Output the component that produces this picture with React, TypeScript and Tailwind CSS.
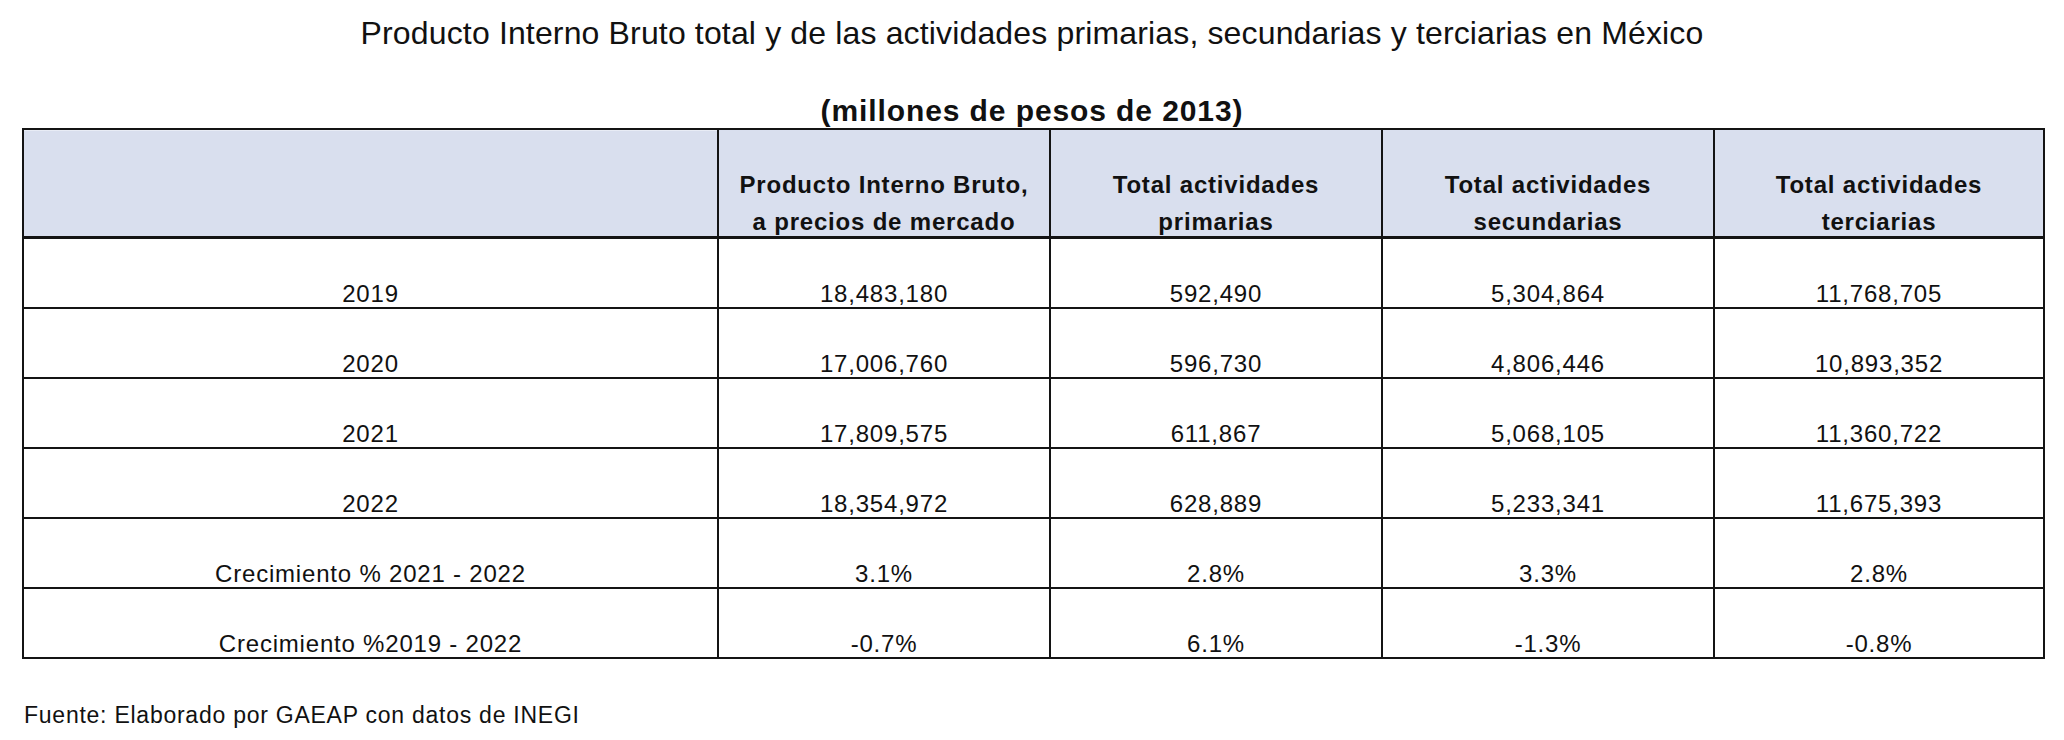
const headers = [
  ['Producto Interno Bruto,', 'a precios de mercado'],
  ['Total actividades', 'primarias'],
  ['Total actividades', 'secundarias'],
  ['Total actividades', 'terciarias'],
];

const rows: string[][] = [
  ['2019', '18,483,180', '592,490', '5,304,864', '11,768,705'],
  ['2020', '17,006,760', '596,730', '4,806,446', '10,893,352'],
  ['2021', '17,809,575', '611,867', '5,068,105', '11,360,722'],
  ['2022', '18,354,972', '628,889', '5,233,341', '11,675,393'],
  ['Crecimiento % 2021 - 2022', '3.1%', '2.8%', '3.3%', '2.8%'],
  ['Crecimiento %2019 - 2022', '-0.7%', '6.1%', '-1.3%', '-0.8%'],
];

const grid = 'grid grid-cols-[693px_332px_332px_332px_330px]';

export default function App() {
  return (
    <div className="w-[2064px] h-[740px] bg-white pt-[15px] text-[#111] font-['Liberation_Sans',Arial,sans-serif]">
      <h1 className="text-center text-[32px] leading-[36px] tracking-[0.15px] font-normal">
        Producto Interno Bruto total y de las actividades primarias, secundarias y terciarias en México
      </h1>
      <h2 className="mt-[42px] text-center text-[30px] leading-[35px] tracking-[0.9px] font-bold">
        (millones de pesos de 2013)
      </h2>

      <div className="ml-[22px] w-[2023px] border-2 border-[#141414]">
        {/* encabezado */}
        <div className={`${grid} h-[109px] bg-[#d9dfee] border-b-[3px] border-[#141414]`}>
          <div className="border-t border-[#e8ecf5]" />
          {headers.map((h, i) => (
            <div
              key={i}
              className="flex flex-col items-center justify-end border-l-2 border-[#141414] text-[24px] leading-[37px] tracking-[0.8px] font-bold text-center -mb-[4px]"
            >
              <span>{h[0]}</span>
              <span>{h[1]}</span>
            </div>
          ))}
        </div>

        {rows.map((row, r) => (
          <div
            key={r}
            className={`${grid} ${r < rows.length - 1 ? 'h-[70px] border-b-2 border-[#141414]' : 'h-[68px]'}`}
          >
            {row.map((cell, c) => (
              <div
                key={c}
                className={`flex items-end justify-center text-[24px] leading-[26px] tracking-[0.8px] ${
                  c > 0 ? 'border-l-2 border-[#141414]' : ''
                }`}
              >
                {cell}
              </div>
            ))}
          </div>
        ))}
      </div>

      <p className="mt-[43px] ml-[24px] text-[23px] leading-[26px] tracking-[0.75px]">
        Fuente: Elaborado por GAEAP con datos de INEGI
      </p>
    </div>
  );
}
